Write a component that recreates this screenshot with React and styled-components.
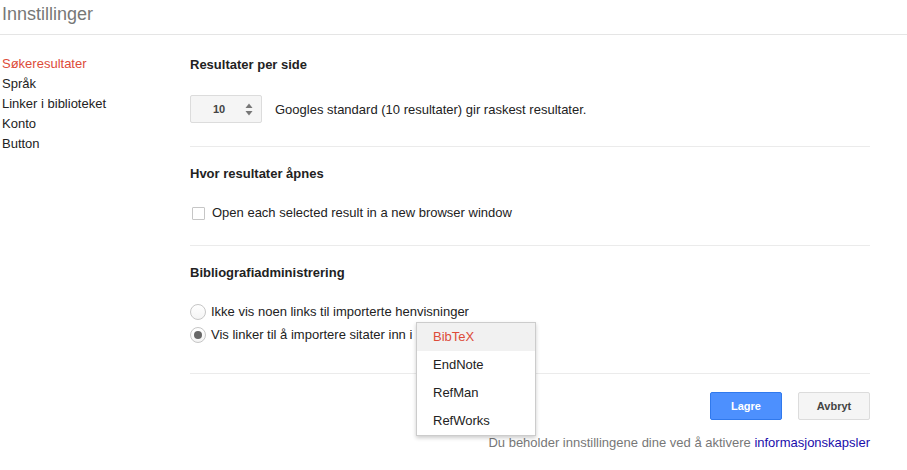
import styled, { createGlobalStyle } from "styled-components";

const GlobalStyle = createGlobalStyle`
  html, body {
    margin: 0;
    padding: 0;
    background: #fff;
  }
  body {
    font-family: "Liberation Sans", Arial, sans-serif;
    font-size: 13px;
    color: #222;
  }
`;

const Header = styled.header`
  height: 34px;
  border-bottom: 1px solid #e5e5e5;
  padding-left: 2px;

  h1 {
    margin: 0;
    font-size: 18px;
    font-weight: normal;
    line-height: 28px;
    color: #777;
  }
`;

const Layout = styled.div`
  display: flex;
  padding-top: 18px;
`;

const Nav = styled.nav`
  width: 188px;
  padding: 1px 0 0 2px;
  display: flex;
  flex-direction: column;
`;

const NavItem = styled.a`
  line-height: 20px;
  color: ${({ $active }) => ($active ? "#dd4b39" : "#222")};
  text-decoration: none;
  cursor: pointer;
`;

const Main = styled.main`
  width: 680px;
  padding-top: 1px;
  display: flex;
  flex-direction: column;
  gap: 16px;
`;

const Section = styled.section`
  padding-bottom: ${({ $pb }) => $pb || 22}px;
  border-bottom: 1px solid #ebebeb;

  h2 {
    margin: 0 0 19px;
    padding-top: 1px;
    font-size: 13px;
    line-height: 20px;
    font-weight: bold;
  }
`;

const SelectRow = styled.div`
  display: flex;
  align-items: center;
  gap: 13px;
  padding: 1px 0;
`;

const NumSelect = styled.div`
  box-sizing: border-box;
  width: 72px;
  height: 28px;
  display: flex;
  align-items: center;
  justify-content: space-between;
  padding: 0 8px 0 20px;
  background: #f5f5f5;
  border: 1px solid #dcdcdc;
  border-radius: 2px;
  font-size: 11px;
  font-weight: bold;
  color: #444;
  span {
    padding-left: 2px;
  }
`;

const Row = styled.label`
  position: relative;
  display: flex;
  align-items: center;
  height: 20px;
  line-height: 20px;
  margin-top: ${({ $mt }) => $mt || 0}px;
`;

const Checkbox = styled.span`
  box-sizing: border-box;
  width: 13px;
  height: 13px;
  margin: 1px 7px 0 2px;
  border: 1px solid #c6c6c6;
  border-radius: 1px;
  background: #fff;
`;

const Radio = styled.span`
  box-sizing: border-box;
  width: 16px;
  height: 16px;
  margin: 0 5px 0 0;
  border: 1px solid #c6c6c6;
  border-radius: 50%;
  background: linear-gradient(#fff, #f4f4f4);
  display: flex;
  align-items: center;
  justify-content: center;

  &::after {
    content: "";
    width: 8px;
    height: 8px;
    border-radius: 50%;
    background: #666;
    display: ${({ $checked }) => ($checked ? "block" : "none")};
  }
`;

const Menu = styled.ul`
  position: absolute;
  left: 226px;
  top: -3px;
  width: 118px;
  margin: 0;
  padding: 0;
  list-style: none;
  background: #fff;
  border: 1px solid rgba(0, 0, 0, 0.2);
  box-shadow: 0 2px 4px rgba(0, 0, 0, 0.2);
  z-index: 2;
`;

const MenuItem = styled.li`
  height: 28px;
  line-height: 28px;
  padding-left: 16px;
  background: ${({ $active }) => ($active ? "#f1f1f1" : "#fff")};
  color: ${({ $active }) => ($active ? "#dd4b39" : "#222")};
  cursor: pointer;
`;

const Actions = styled.div`
  display: flex;
  justify-content: flex-end;
  gap: 16px;
  margin-top: 2px;
`;

const Button = styled.button`
  box-sizing: border-box;
  width: 72px;
  height: 28px;
  border-radius: 2px;
  font-family: inherit;
  font-size: 11px;
  font-weight: bold;
  cursor: pointer;
  color: ${({ $primary }) => ($primary ? "#fff" : "#444")};
  background: ${({ $primary }) => ($primary ? "#4d90fe" : "#f5f5f5")};
  border: 1px solid ${({ $primary }) => ($primary ? "#3079ed" : "#dcdcdc")};
`;

const Note = styled.p`
  margin: 13px 0 0;
  line-height: 20px;
  text-align: right;
  color: #777;

  a {
    color: #1a0dab;
    text-decoration: none;
  }
`;

function Arrows() {
  return (
    <svg width="8" height="13" viewBox="0 0 8 13">
      <path d="M4 0.5 L7.5 5 H0.5 Z" fill="#777" />
      <path d="M4 12.5 L7.5 8 H0.5 Z" fill="#777" />
    </svg>
  );
}

const navItems = ["Søkeresultater", "Språk", "Linker i biblioteket", "Konto", "Button"];
const formats = ["BibTeX", "EndNote", "RefMan", "RefWorks"];

export default function App() {
  return (
    <>
      <GlobalStyle />
      <Header>
        <h1>Innstillinger</h1>
      </Header>
      <Layout>
        <Nav>
          {navItems.map((item, i) => (
            <NavItem key={item} $active={i === 0}>
              {item}
            </NavItem>
          ))}
        </Nav>
        <Main>
          <Section>
            <h2>Resultater per side</h2>
            <SelectRow>
              <NumSelect>
                <span>10</span>
                <Arrows />
              </NumSelect>
              Googles standard (10 resultater) gir raskest resultater.
            </SelectRow>
          </Section>

          <Section>
            <h2>Hvor resultater åpnes</h2>
            <Row>
              <Checkbox />
              Open each selected result in a new browser window
            </Row>
          </Section>

          <Section $pb={28}>
            <h2>Bibliografiadministrering</h2>
            <Row>
              <Radio />
              Ikke vis noen links til importerte henvisninger
            </Row>
            <Row $mt={3}>
              <Radio $checked />
              Vis linker til å importere sitater inn i
              <Menu>
                {formats.map((f, i) => (
                  <MenuItem key={f} $active={i === 0}>
                    {f}
                  </MenuItem>
                ))}
              </Menu>
            </Row>
          </Section>

          <div>
            <Actions>
              <Button $primary>Lagre</Button>
              <Button>Avbryt</Button>
            </Actions>
            <Note>
              Du beholder innstillingene dine ved å aktivere{" "}
              <a href="#">informasjonskapsler</a>
            </Note>
          </div>
        </Main>
      </Layout>
    </>
  );
}
